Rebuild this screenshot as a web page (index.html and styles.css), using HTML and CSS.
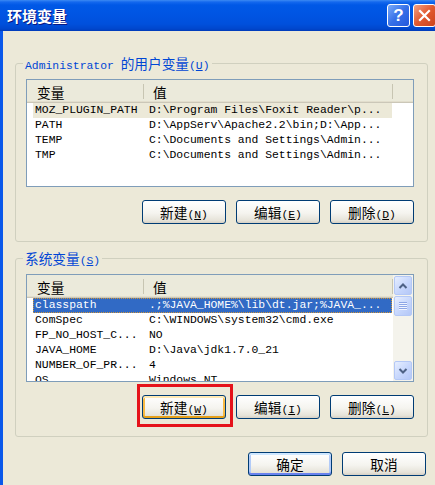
FILE: index.html
```html
<!doctype html>
<html lang="zh-CN">
<head>
  <meta charset="utf-8">
  <title>环境变量</title>
  <link rel="stylesheet" href="styles.css">
</head>
<body>

<div class="window">
  <div class="titlebar">
    <span class="title">环境变量</span>
    <span class="tb-btn help">?</span>
    <span class="tb-btn close">
      <svg width="13" height="13" viewBox="0 0 13 13"><path d="M2 2 L11 11 M11 2 L2 11" stroke="#fff" stroke-width="2.2" stroke-linecap="square"/></svg>
    </span>
  </div>

  <div class="client">
    <section class="group">
      <div class="group-title">Administrator <span class="zh">的用户变量</span>(<u>U</u>)</div>
      <div class="list">
        <div class="list-main">
          <div class="list-head"><span class="hcell c1 zh">变量</span><span class="hcell c2 zh">值</span></div>
          <div class="row inactive"><span class="cell c1">MOZ_PLUGIN_PATH</span><span class="cell c2">D:\Program Files\Foxit Reader\p...</span></div>
          <div class="row"><span class="cell c1">PATH</span><span class="cell c2">D:\AppServ\Apache2.2\bin;D:\App...</span></div>
          <div class="row"><span class="cell c1">TEMP</span><span class="cell c2">C:\Documents and Settings\Admin...</span></div>
          <div class="row"><span class="cell c1">TMP</span><span class="cell c2">C:\Documents and Settings\Admin...</span></div>
        </div>
      </div>
      <div class="buttons">
        <button class="btn"><span class="zh">新建</span>(<u>N</u>)</button>
        <button class="btn"><span class="zh">编辑</span>(<u>E</u>)</button>
        <button class="btn"><span class="zh">删除</span>(<u>D</u>)</button>
      </div>
    </section>

    <section class="group">
      <div class="group-title"><span class="zh">系统变量</span>(<u>S</u>)</div>
      <div class="list">
        <div class="list-main">
          <div class="list-head"><span class="hcell c1 zh">变量</span><span class="hcell c2 zh">值</span></div>
          <div class="row active"><span class="cell c1">classpath</span><span class="cell c2">.;%JAVA_HOME%\lib\dt.jar;%JAVA_...</span></div>
          <div class="row"><span class="cell c1">ComSpec</span><span class="cell c2">C:\WINDOWS\system32\cmd.exe</span></div>
          <div class="row"><span class="cell c1">FP_NO_HOST_C...</span><span class="cell c2">NO</span></div>
          <div class="row"><span class="cell c1">JAVA_HOME</span><span class="cell c2">D:\Java\jdk1.7.0_21</span></div>
          <div class="row"><span class="cell c1">NUMBER_OF_PR...</span><span class="cell c2">4</span></div>
          <div class="row"><span class="cell c1">OS</span><span class="cell c2">Windows_NT</span></div>
        </div>
        <div class="scrollbar">
          <span class="sb-btn"><svg width="10" height="8" viewBox="0 0 10 8"><path d="M1.5 6 L5 2.5 L8.5 6" fill="none" stroke="#4D6185" stroke-width="2"/></svg></span>
          <span class="sb-btn sb-thumb"><svg width="8" height="8" viewBox="0 0 8 8"><path d="M0 0.5 H8 M0 2.5 H8 M0 4.5 H8 M0 6.5 H8" stroke="#8DA6E6" stroke-width="1"/><path d="M0 1.5 H8 M0 3.5 H8 M0 5.5 H8 M0 7.5 H8" stroke="#F0F4FF" stroke-width="1"/></svg></span>
          <span class="sb-track"></span>
          <span class="sb-btn"><svg width="10" height="8" viewBox="0 0 10 8"><path d="M1.5 2 L5 5.5 L8.5 2" fill="none" stroke="#4D6185" stroke-width="2"/></svg></span>
        </div>
      </div>
      <div class="buttons">
        <span class="mark"><button class="btn hot"><span class="zh">新建</span>(<u>W</u>)</button></span>
        <button class="btn"><span class="zh">编辑</span>(<u>I</u>)</button>
        <button class="btn"><span class="zh">删除</span>(<u>L</u>)</button>
      </div>
    </section>

    <div class="buttons dialog-buttons">
      <button class="btn default"><span class="zh">确定</span></button>
      <button class="btn"><span class="zh">取消</span></button>
    </div>
  </div>
</div>

</body>
</html>
```

FILE: styles.css
```css
:root {
  --face: #ECE9D8;
  --frame: #0A58EA;
  --legend: #0046D5;
  --group-border: #D0D0BF;
  --list-border: #7F9DB9;
  --select: #316AC5;
}
html,
body {
  margin: 0;
}
body {
  width: 435px;
  height: 485px;
  overflow: hidden;
  background: var(--face);
  color: #000;
  font-family: "Liberation Mono", "Noto Sans CJK SC", monospace;
  font-size: 11.4px;
}
*, *:before, *:after {
  box-sizing: border-box;
}
.zh {
  font-family: "Noto Sans CJK SC", sans-serif;
  font-size: 1.2em;
}
.window {
  width: 443px;
}

/* title bar */
.titlebar {
  display: flex;
  align-items: center;
  gap: 3px;
  height: 31px;
  padding: 0 7px;
  background: linear-gradient(#3C8AF3 0, #1468EE 2px, #0058E6 5px, #0055E3 14px, #0050DC 24px, #0046CC 29px, #003AB8 31px);
}
.title {
  flex: 1;
  color: #fff;
  font-family: "Noto Sans CJK SC", sans-serif;
  font-weight: 700;
  font-size: 15px;
  text-shadow: 1px 1px #0A1883;
}
.tb-btn {
  display: flex;
  align-items: center;
  justify-content: center;
  width: 23px;
  height: 23px;
  border: 1px solid #fff;
  border-radius: 3px;
}
.help {
  background: linear-gradient(135deg, #79AAF9, #3670E8 50%, #2358DC);
  color: #fff;
  font: bold 17px "Liberation Sans", sans-serif;
}
.close {
  background: linear-gradient(135deg, #F3A285, #E2592F 50%, #CB431E);
}

/* dialog body */
.client {
  border-left: 3px solid var(--frame);
  border-right: 3px solid var(--frame);
  padding: 32px 12px 20px;
  background: var(--face);
}
.group {
  border: 1px solid var(--group-border);
  border-radius: 3px;
  padding: 0 13px 17px 10px;
}
.group + .group {
  margin-top: 16px;
}
.group-title {
  width: fit-content;
  height: 16px;
  line-height: 16px;
  margin: -9px 0 0 -3px;
  padding: 0 2px;
  background: var(--face);
  color: var(--legend);
  white-space: nowrap;
}

/* list view */
.list {
  display: flex;
  height: 108px;
  margin-top: 8px;
  border: 1px solid var(--list-border);
  background: #fff;
  overflow: hidden;
}
.list-main {
  flex: 1;
  min-width: 0;
  overflow: hidden;
}
.list-head {
  display: flex;
  height: 23px;
  background: #EBEADB;
  box-shadow: inset 0 -1px #CBC7B8, inset 0 -2px #E2DECD;
}
.hcell {
  display: flex;
  align-items: center;
  padding-left: 10px;
  background: linear-gradient(#C7C5B2, #C7C5B2) right center / 1px 15px no-repeat;
}
.hcell.c1 {
  width: 117px;
}
.hcell.c2 {
  width: 249px;
  padding-left: 9px;
}
.row {
  display: flex;
  width: 359px;
  height: 15px;
  line-height: 15px;
  margin-left: 6px;
  white-space: nowrap;
}
.cell {
  overflow: hidden;
}
.row .c1 {
  width: 110px;
  padding-left: 2px;
}
.row .c2 {
  flex: 1;
  padding-left: 6px;
}
.row.inactive {
  background: var(--face);
}
.row.active {
  background: var(--select);
  color: #fff;
  outline: 1px dotted #CE953A;
  outline-offset: -1px;
}

/* scrollbar */
.scrollbar {
  display: flex;
  flex-direction: column;
  width: 20px;
  padding: 1px;
  background: #F4F3EC;
}
.sb-btn {
  display: flex;
  align-items: center;
  justify-content: center;
  height: 19px;
  border: 1px solid #B4C8F6;
  border-radius: 2px;
  background: linear-gradient(135deg, #E6EEFF, #C6D6FC 55%, #B4C7F7);
}
.sb-thumb {
  height: 20px;
  margin-top: 1px;
}
.sb-track {
  flex: 1;
}

/* buttons */
.buttons {
  display: flex;
  justify-content: flex-end;
  gap: 10px;
  margin-top: 13px;
}
.btn {
  width: 84px;
  height: 24px;
  padding: 0;
  border: 1px solid #003C74;
  border-radius: 3px;
  background: linear-gradient(#FFFFFF, #F5F4EF 55%, #E6E3D9 88%, #D6D0C5);
  color: #000;
  font: inherit;
}
.btn.hot {
  box-shadow: inset 0 2px #FFEAB4, inset 0 -2px #E5A01A, inset 2px 0 #F8BA45, inset -2px 0 #F8BA45;
}
.btn.default {
  box-shadow: inset 0 2px #CEE7FF, inset 0 -2px #6982EE, inset 2px 0 #B2CBF8, inset -2px 0 #B2CBF8;
}
.dialog-buttons {
  margin: 15px 2px 0 0;
}

/* red annotation around the system "new" button */
.mark {
  display: block;
  position: relative;
}
.mark::after {
  content: "";
  position: absolute;
  inset: -11px -7px -8px -5px;
  border: 3px solid #E5121A;
  pointer-events: none;
}
```
